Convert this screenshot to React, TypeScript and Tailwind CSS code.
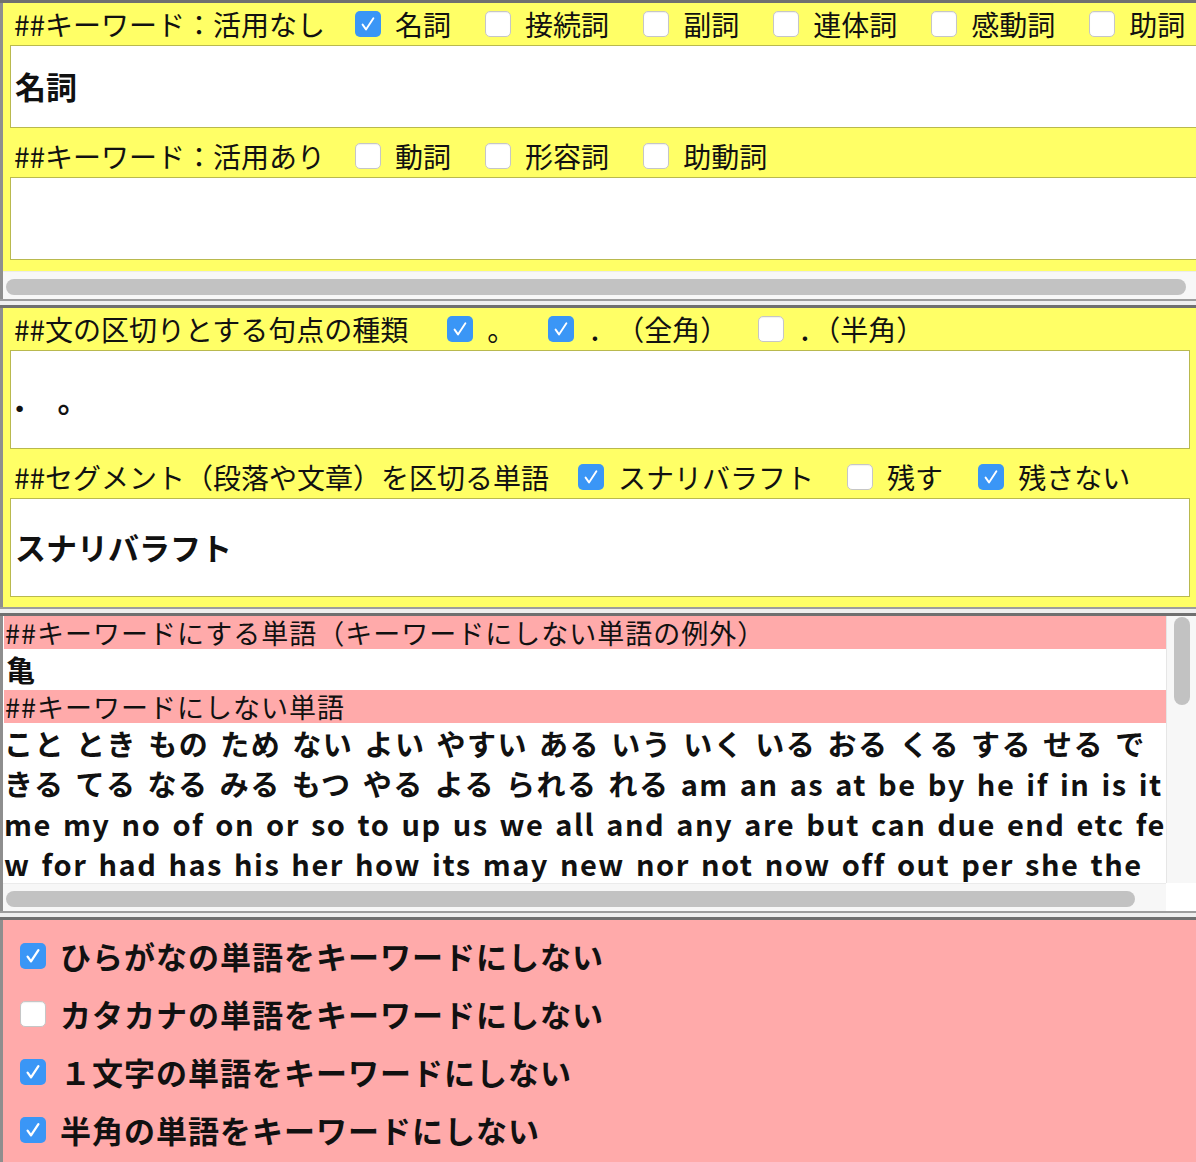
import React from "react";

function Check({ on, big }: { on?: boolean; big?: boolean }) {
  if (on) {
    return (
      <span className="inline-flex h-[26px] w-[26px] shrink-0 items-center justify-center rounded-[5px] bg-[#3a96f6]">
        <svg viewBox="0 0 26 26" className="h-[26px] w-[26px]">
          <path
            d="M7.6 13.6 L11 18.4 L18.4 7.2"
            fill="none"
            stroke="white"
            strokeWidth={big ? 2.3 : 1.9}
            strokeLinecap="round"
            strokeLinejoin="round"
          />
        </svg>
      </span>
    );
  }
  return (
    <span className="inline-block h-[26px] w-[26px] shrink-0 rounded-[5px] border border-[#c6c6c6] bg-white shadow-[inset_0_1px_1px_rgba(0,0,0,0.06)]" />
  );
}

// checkbox + label, with the gap before the checkbox given per item
function Opt({ on, label, ml }: { on?: boolean; label: string; ml: string }) {
  return (
    <span className={`flex items-center ${ml}`}>
      <Check on={on} />
      <span className="ml-[14px] whitespace-nowrap">{label}</span>
    </span>
  );
}

function Divider() {
  return (
    <div>
      <div className="h-[2px] bg-[#9d9d9d]" />
      <div className="h-[4px] bg-[#efefef]" />
      <div className="h-[3px] bg-[#707070]" />
    </div>
  );
}

function HScroll({ thumb }: { thumb: string }) {
  return (
    <div className="h-[28px] border-t border-[#ebebeb] bg-[#f7f7f7] pt-[7px]">
      <div className={`ml-[3px] h-[16px] rounded-full bg-[#c2c2c2] ${thumb}`} />
    </div>
  );
}

const stopLines = [
  "こと とき もの ため ない よい やすい ある いう いく いる おる くる する せる で",
  "きる てる なる みる もつ やる よる られる れる am an as at be by he if in is it",
  "me my no of on or so to up us we all and any are but can due end etc fe",
  "w for had has his her how its may new nor not now off out per she the",
];

export default function App() {
  return (
    <div className="w-[1196px] overflow-hidden bg-white font-['Noto_Sans_CJK_JP','Noto_Sans',sans-serif] text-[#111]">
      <div className="h-[3px] bg-[#707070]" />

      {/* frame 1: keyword parts of speech */}
      <div className="border-l-[3px] border-[#8e8e8e]">
        <div className="overflow-hidden bg-[#ffff66]">
          <div className="w-[1215px] pb-[11px] text-[28px]">
            <div className="flex h-[42px] items-center pl-[11px]">
              <span className="whitespace-nowrap">##キーワード：活用なし</span>
              <Opt on label="名詞" ml="ml-[30px]" />
              <Opt label="接続詞" ml="ml-[34px]" />
              <Opt label="副詞" ml="ml-[34px]" />
              <Opt label="連体詞" ml="ml-[34px]" />
              <Opt label="感動詞" ml="ml-[34px]" />
              <Opt label="助詞" ml="ml-[34px]" />
            </div>
            <div className="ml-[7px] flex h-[83px] items-center border border-[#b9b94e] bg-white pl-[4px] text-[31px] font-bold">
              名詞
            </div>
            <div className="mt-[7px] flex h-[42px] items-center pl-[11px]">
              <span className="whitespace-nowrap">##キーワード：活用あり</span>
              <Opt label="動詞" ml="ml-[30px]" />
              <Opt label="形容詞" ml="ml-[34px]" />
              <Opt label="助動詞" ml="ml-[34px]" />
            </div>
            <div className="ml-[7px] h-[83px] border border-[#b9b94e] bg-white" />
          </div>
        </div>
        <HScroll thumb="w-[1180px]" />
      </div>

      <Divider />

      {/* frame 2: sentence delimiters */}
      <div className="border-l-[3px] border-[#8e8e8e]">
        <div className="bg-[#ffff66] pb-[10px] text-[28px]">
          <div className="flex h-[42px] items-center pl-[11px]">
            <span className="whitespace-nowrap">##文の区切りとする句点の種類</span>
            <Opt on label="。" ml="ml-[39px]" />
            <Opt on label="．　（全角）" ml="ml-[33px]" />
            <Opt label="．（半角）" ml="ml-[30px]" />
          </div>
          <div className="ml-[7px] mr-[6px] flex h-[99px] items-center border border-[#b9b94e] bg-white text-[31px] font-bold">
            ．　。
          </div>
          <div className="mt-[7px] flex h-[42px] items-center pl-[11px]">
            <span className="whitespace-nowrap">##セグメント（段落や文章）を区切る単語</span>
            <Opt on label="スナリバラフト" ml="ml-[29px]" />
            <Opt label="残す" ml="ml-[33px]" />
            <Opt on label="残さない" ml="ml-[35px]" />
          </div>
          <div className="ml-[7px] mr-[6px] flex h-[99px] items-center border border-[#b9b94e] bg-white pl-[4px] text-[31px] font-bold">
            スナリバラフト
          </div>
        </div>
      </div>

      <Divider />

      {/* frame 3: word lists */}
      <div className="border-l-[3px] border-[#8e8e8e]">
        <div className="flex h-[267px]">
          <div className="min-w-0 flex-1 overflow-hidden pl-[1px]">
            <div className="h-[33px] whitespace-nowrap bg-[#ffaaaa] pl-[1px] text-[27px] leading-[33px] tracking-[1px]">
              ##キーワードにする単語（キーワードにしない単語の例外）
            </div>
            <div className="h-[41px] pl-[2px] text-[29px] font-bold leading-[41px]">亀</div>
            <div className="h-[33px] whitespace-nowrap bg-[#ffaaaa] pl-[1px] text-[27px] leading-[33px] tracking-[1px]">
              ##キーワードにしない単語
            </div>
            {stopLines.map((line) => (
              <div
                key={line}
                className="h-[40px] overflow-hidden whitespace-nowrap text-[29px] font-bold leading-[40px] tracking-[1.5px] [word-spacing:3px]"
              >
                {line}
              </div>
            ))}
          </div>
          <div className="w-[30px] border-l border-[#e6e6e6] bg-[#f7f7f7] pl-[7px] pt-[1px]">
            <div className="h-[88px] w-[16px] rounded-full bg-[#c2c2c2]" />
          </div>
        </div>
        <div className="flex">
          <div className="flex-1">
            <HScroll thumb="w-[1129px]" />
          </div>
          <div className="h-[28px] w-[30px] bg-white" />
        </div>
      </div>

      <Divider />

      {/* frame 4: filters */}
      <div className="h-[242px] border-l-[3px] border-[#8e8e8e] bg-[#ffaaaa] pl-[17px] pt-[7px] text-[31px] font-bold tracking-[1px]">
        {[
          { on: true, label: "ひらがなの単語をキーワードにしない" },
          { on: false, label: "カタカナの単語をキーワードにしない" },
          { on: true, label: "１文字の単語をキーワードにしない" },
          { on: true, label: "半角の単語をキーワードにしない" },
        ].map((r) => (
          <div key={r.label} className="flex h-[58px] items-center">
            <Check on={r.on} big />
            <span className="ml-[14px] whitespace-nowrap">{r.label}</span>
          </div>
        ))}
      </div>
    </div>
  );
}
